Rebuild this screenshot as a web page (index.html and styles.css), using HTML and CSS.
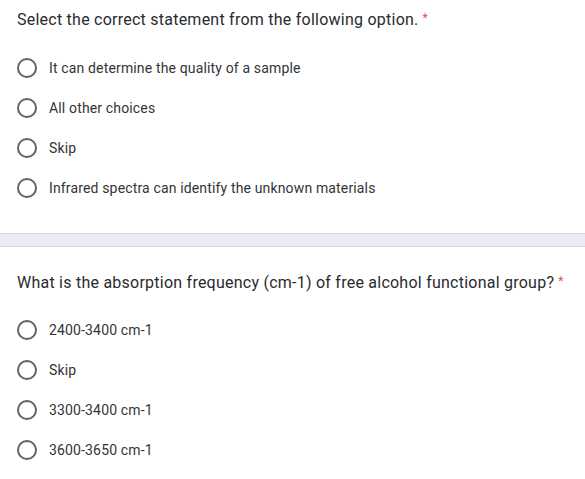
FILE: index.html
```html
<!DOCTYPE html>
<html>
<head>
<meta charset="utf-8">
<link rel="stylesheet" href="styles.css">
</head>
<body>
<section class="question q1">
  <div class="title">Select the correct statement from the following option.<span class="req">*</span></div>
  <div class="options">
    <div class="option"><span class="radio"></span><span class="label">It can determine the quality of a sample</span></div>
    <div class="option"><span class="radio"></span><span class="label">All other choices</span></div>
    <div class="option"><span class="radio"></span><span class="label">Skip</span></div>
    <div class="option"><span class="radio"></span><span class="label">Infrared spectra can identify the unknown materials</span></div>
  </div>
</section>
<div class="divider"></div>
<section class="question q2">
  <div class="title">What is the absorption frequency (cm-1) of free alcohol functional group?<span class="req">*</span></div>
  <div class="options">
    <div class="option"><span class="radio"></span><span class="label">2400-3400 cm-1</span></div>
    <div class="option"><span class="radio"></span><span class="label">Skip</span></div>
    <div class="option"><span class="radio"></span><span class="label">3300-3400 cm-1</span></div>
    <div class="option"><span class="radio"></span><span class="label">3600-3650 cm-1</span></div>
  </div>
</section>
</body>
</html>
```
FILE: styles.css
```css
html, body {
  margin: 0;
  padding: 0;
  background: #ffffff;
}
body {
  width: 585px;
  height: 479px;
  overflow: hidden;
}
.question {
  padding-left: 17px;
  display: flex;
  flex-direction: column;
}
.q1 {
  padding-top: 8px;
  padding-bottom: 25px;
}
.q2 {
  padding-top: 24px;
}
.title {
  font-family: "Roboto", "Liberation Sans", sans-serif;
  font-size: 16px;
  line-height: 24px;
  height: 24px;
  color: #2a2b2e;
  letter-spacing: 0.24px;
}
.req {
  color: #d9534f;
  margin-left: 4px;
  font-size: 12px;
  position: relative;
  top: -3px;
}
.options {
  display: flex;
  flex-direction: column;
}
.q1 .options {
  margin-top: 16px;
}
.q2 .options {
  margin-top: 15px;
}
.option {
  height: 40px;
  display: flex;
  align-items: center;
}
.radio {
  box-sizing: border-box;
  width: 20px;
  height: 20px;
  border: 2px solid #5f6368;
  border-radius: 50%;
  flex: none;
}
.label {
  margin-left: 12px;
  font-family: "Roboto", "Liberation Sans", sans-serif;
  font-size: 14px;
  color: #333438;
  letter-spacing: 0.15px;
}
.divider {
  height: 12px;
  background: #ede9f9;
  border-top: 1px solid #d9d9dc;
  border-bottom: 1px solid #d9d9dc;
}
```
